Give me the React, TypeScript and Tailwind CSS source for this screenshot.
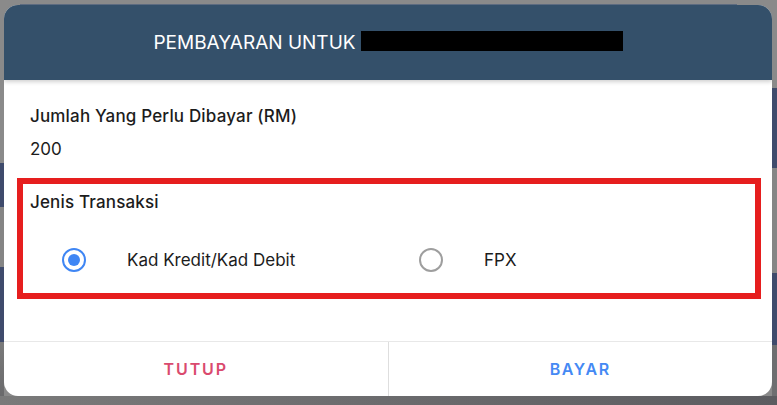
import { FC, useState } from "react";

// Latar halaman di belakang modal (gelap, kabur)
const LeftStrip: FC = () => (
  <div className="flex w-[4px] flex-col">
    <div className="h-[158px] bg-[#8a8a8a]" />
    <div className="h-[44px] bg-[#3f4b6c]" />
    <div className="h-[60px] bg-[#858585]" />
    <div className="h-[75px] bg-[#3f4b6c]" />
    <div className="flex-1 bg-gradient-to-b from-[#7a7a7a] to-[#6a6a6c]" />
  </div>
);

const RightStrip: FC = () => (
  <div className="flex w-[5px] flex-col">
    <div className="h-[83px] bg-[#8a8a8a]" />
    <div className="h-[80px] bg-[#3f4b6c]" />
    <div className="h-[105px] bg-[#868686]" />
    <div className="h-[72px] bg-[#3f4b6c]" />
    <div className="flex-1 bg-[#6e6e70]" />
  </div>
);

type Option = { id: string; label: string; width: string };

const options: Option[] = [
  { id: "kad", label: "Kad Kredit/Kad Debit", width: "w-[357px]" },
  { id: "fpx", label: "FPX", width: "w-[200px]" },
];

const App: FC = () => {
  const [jenis, setJenis] = useState<string>("kad");

  return (
    <div
      className="flex h-[405px] w-[777px] flex-col overflow-hidden bg-[#8a8a8a]"
      style={{ fontFamily: "Inter, 'Noto Sans', sans-serif" }}
    >
      <div className="flex h-[5px] items-end pl-[20px] pr-[40px]">
        <div className="h-[1px] w-full bg-[#5d6b80]" />
      </div>

      <div className="flex h-[391px]">
        <LeftStrip />

        {/* Modal pembayaran */}
        <div className="flex w-[768px] flex-col overflow-hidden rounded-[14px] bg-white">
          <div className="relative z-10 flex h-[75px] shrink-0 items-center justify-center bg-[#34506a] shadow-[0_2px_4px_rgba(0,0,0,0.18)]">
            <span className="text-[19px] leading-none text-white">PEMBAYARAN UNTUK</span>
            <span className="ml-[5px] mt-[-3px] h-[20px] w-[262px] bg-black" />
          </div>

          <div className="flex flex-1 flex-col pl-[13px] pt-[24px] text-[#1c1c1c]">
            <p className="pl-[13px] text-[17px] font-medium leading-[24px] tracking-[0.01em]">
              Jumlah Yang Perlu Dibayar (RM)
            </p>
            <p className="mt-[9px] pl-[13px] text-[17px] leading-[24px]">200</p>

            <div className="mt-[17px] flex h-[121px] w-[744px] flex-col border-[6px] border-[#e61e1e] pl-[7px] pt-[6px]">
              <p className="text-[17px] font-medium leading-[24px] tracking-[0.01em]">Jenis Transaksi</p>
              <div className="mt-[34px] flex items-center pl-[32px]">
                {options.map((o) => (
                  <label
                    key={o.id}
                    className={`flex h-[24px] cursor-pointer items-center ${o.width}`}
                    onClick={() => setJenis(o.id)}
                  >
                    <span
                      className={`flex h-[24px] w-[24px] items-center justify-center rounded-full border-2 ${
                        jenis === o.id ? "border-[#3f86f4]" : "border-[#9e9e9e]"
                      }`}
                    >
                      {jenis === o.id && (
                        <span className="h-[12px] w-[12px] rounded-full bg-[#3f86f4]" />
                      )}
                    </span>
                    <span className="ml-[41px] text-[17px] leading-[24px]">{o.label}</span>
                  </label>
                ))}
              </div>
            </div>
          </div>

          <div className="flex h-[55px] shrink-0 border-t border-[#e8e8e8]">
            <button className="flex flex-1 items-center justify-center border-r border-[#dedede] text-[16px] font-semibold tracking-[0.12em] text-[#da4a6e]">
              TUTUP
            </button>
            <button className="flex flex-1 items-center justify-center text-[16px] font-semibold tracking-[0.1em] text-[#4589f4]">
              BAYAR
            </button>
          </div>
        </div>

        <RightStrip />
      </div>

      <div className="flex-1 bg-gradient-to-r from-[#7a7a7a] to-[#5c5c60]" />
    </div>
  );
};

export default App;
